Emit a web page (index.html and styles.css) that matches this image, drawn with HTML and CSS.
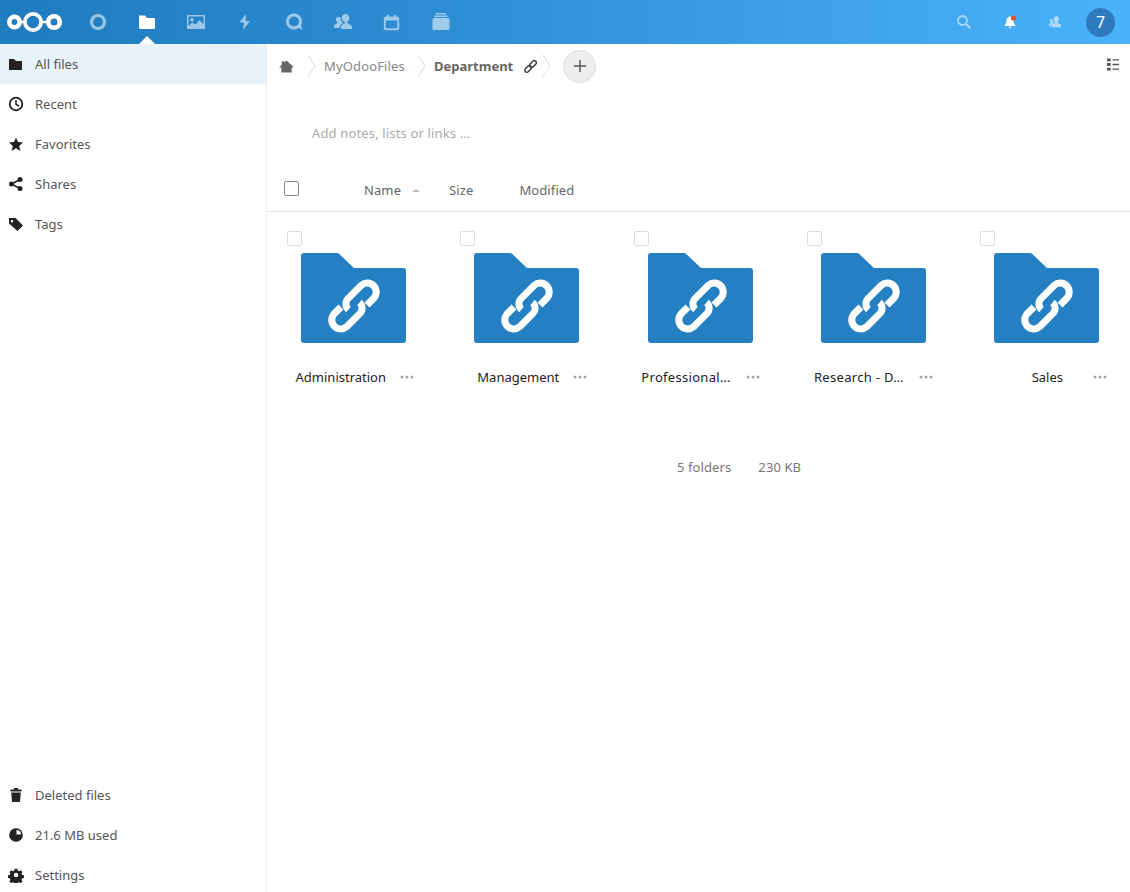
FILE: index.html
```html
<!DOCTYPE html>
<html lang="en">
<head>
    <meta charset="UTF-8">
    <title>Files</title>
    <link rel="stylesheet" href="styles.css">
</head>
<body>
    <header class="topbar">
        <svg class="logo" width="56" height="24" viewBox="0 0 56 24">
            <path d="M12 12h6M33 12h6" class="bridge"/>
            <circle cx="7.5" cy="12" r="5.2" class="ring-thick"/>
            <circle cx="26" cy="12" r="8.1" class="ring-big"/>
            <circle cx="47" cy="12" r="5.800" class="ring-thick"/>
        </svg>
        <nav class="apps">
            <a class="app"><svg width="20" height="20" viewBox="0 0 20 20"><circle cx="10" cy="10" r="6.5" fill="none" stroke="#fff" stroke-width="3.2"/></svg></a>
            <a class="app active"><svg width="20" height="20" viewBox="0 0 20 20"><path d="M2 3.5h6l2 2.5h7a1 1 0 0 1 1 1v9a1 1 0 0 1-1 1H3a1 1 0 0 1-1-1z" fill="#fff"/></svg></a>
            <a class="app"><svg width="20" height="20" viewBox="0 0 20 20"><path fill="#fff" fill-rule="evenodd" d="M2 3h16a1 1 0 0 1 1 1v12a1 1 0 0 1-1 1H2a1 1 0 0 1-1-1V4a1 1 0 0 1 1-1zM2.500 4.500v9.500l4-3.500 3 2 4-4.500 4 4.500v-8zM6 6a1.800 1.800 0 1 1 0 3.600A1.800 1.800 0 0 1 6 6z"/></svg></a>
            <a class="app"><svg width="20" height="20" viewBox="0 0 20 20"><path fill="#fff" d="M11 2 4.500 10.500H9L8 18l7-9h-4.500z"/></svg></a>
            <a class="app"><svg width="20" height="20" viewBox="0 0 20 20"><circle cx="10" cy="9.500" r="6.500" fill="none" stroke="#fff" stroke-width="3"/><path fill="#fff" d="M13 14.500l3-3 2.500 6.500z"/></svg></a>
            <a class="app"><svg width="20" height="20" viewBox="0 0 20 20"><path fill="#fff" d="M12.500 2a3.800 3.800 0 0 1 3.800 4c0 2-1 3.500-2 4.300v1c1 .7 4.700 1.500 4.700 3.700v2H8v-2c0-2.200 3-3 4-3.700v-1C10 9.500 8.700 8 8.700 6a3.800 3.800 0 0 1 3.800-4zM5.500 5a3 3 0 0 1 2 .8c0 2 .8 3.700 2.200 5v.7C8 12.300 6.500 13.500 6.500 16H1v-2c0-1.800 2.500-2.200 3.300-2.800v-1C3.500 9.500 2.700 8.300 2.700 7A2.800 2.800 0 0 1 5.500 5z"/></svg></a>
            <a class="app"><svg width="17" height="17" viewBox="0 0 20 20"><path fill="#fff" fill-rule="evenodd" d="M5 1h2v2h6V1h2v2h2a2 2 0 0 1 2 2v12a2 2 0 0 1-2 2H3a2 2 0 0 1-2-2V5a2 2 0 0 1 2-2h2zM3.200 7.500V16a.8.8 0 0 0 .8.800h12a.8.8 0 0 0 .8-.8V7.500z"/></svg></a>
            <a class="app"><svg width="20" height="20" viewBox="0 0 20 20"><path fill="#fff" d="M5 1h10v1.500H5zM3.500 3.500h13V5h-13zM3 6h14a1.500 1.500 0 0 1 1.500 1.500v9A1.500 1.500 0 0 1 17 18H3a1.500 1.500 0 0 1-1.500-1.500v-9A1.500 1.500 0 0 1 3 6z"/></svg></a>
        </nav>
        <div class="top-right">
            <a class="app top-search"><svg width="16" height="16" viewBox="0 0 16 16"><circle cx="6.500" cy="6.500" r="4.500" fill="none" stroke="#fff" stroke-width="1.800"/><path d="M10 10l4.500 4.500" stroke="#fff" stroke-width="2"/></svg></a>
            <a class="bell"><svg width="14" height="14" viewBox="0 0 16 16"><path fill="#fff" d="M8 1.500c.6 0 1 .4 1 .9 2 .5 3 2 3 4.100 0 3 1 4 2 5v1H2v-1c1-1 2-2 2-5 0-2.100 1-3.600 3-4.100 0-.5.400-.9 1-.9zM6.500 13.500h3a1.500 1.500 0 0 1-3 0z"/><circle cx="12" cy="3.500" r="3" fill="#e8502a"/></svg></a>
            <a class="app top-contacts"><svg width="14" height="14" viewBox="0 0 16 16"><path fill="#fff" d="M9.500 1.500c1.700 0 3 1.300 3 3.200 0 1.600-.8 2.700-1.500 3.300v1c.8.600 4 1 4 3v2H4v-2c0-2 3-2.400 4-3V8C7.200 7.400 6.500 6.300 6.500 4.700c0-1.900 1.300-3.200 3-3.200zM4 4.500c.5 0 1 .2 1.300.500 0 1.500.5 2.800 1.500 3.700v.5C5.500 10 3.500 10.500 3 12.500H1v-1.500c0-1.300 1.500-1.700 2-2.200v-1c-.6-.5-1-1.300-1-2.100C2 5.500 3 4.500 4 4.500z"/></svg></a>
            <div class="avatar">7</div>
        </div>
    </header>
    <div class="layout">
        <aside class="sidebar">
            <ul class="side-list">
                <li class="side-item selected"><svg class="side-icon" viewBox="0 0 16 16"><path d="M1 3h5l2 2h6v9H1z"/></svg>All files</li>
                <li class="side-item"><svg class="side-icon" viewBox="0 0 16 16"><circle cx="8" cy="8" r="6.300" fill="none" stroke="#222" stroke-width="1.800"/><path d="M8 4v4.300l3 1.700" fill="none" stroke="#222" stroke-width="1.500"/></svg>Recent</li>
                <li class="side-item"><svg class="side-icon" viewBox="0 0 16 16"><path d="M8 1.500l2 4.600 5 .5-3.800 3.300 1.200 5L8 12.200 3.600 14.900l1.200-5L1 6.600l5-.5z"/></svg>Favorites</li>
                <li class="side-item"><svg class="side-icon" viewBox="0 0 16 16"><circle cx="12" cy="3.500" r="2.500"/><circle cx="12" cy="12.500" r="2.500"/><circle cx="3.500" cy="8" r="2.500"/><path d="M12 3.500 3.500 8l8.500 4.500" fill="none" stroke="#222" stroke-width="1.500"/></svg>Shares</li>
                <li class="side-item"><svg class="side-icon" viewBox="0 0 16 16"><path fill-rule="evenodd" d="M1 2h6.500L15 9.500 9.500 15 1 7.500zM4 4a1.200 1.200 0 1 0 0 2.400A1.200 1.200 0 0 0 4 4z"/></svg>Tags</li>
            </ul>
            <ul class="side-list">
                <li class="side-item"><svg class="side-icon" viewBox="0 0 16 16"><path d="M6 1h4v1.500h3.500v2h-11v-2H6zM3.200 5.500h9.600l-.8 9.500H4z"/></svg>Deleted files</li>
                <li class="side-item"><svg class="side-icon" viewBox="0 0 16 16"><circle cx="8" cy="8" r="6.800"/><path fill="#fff" d="M8.500 7.500V2.900a4.700 4.700 0 0 1 4.600 4.600z"/></svg>21.6 MB used</li>
                <li class="side-item"><svg class="side-icon" viewBox="0 0 16 16"><path fill-rule="evenodd" d="M6.500 1h3l.4 2 1.500.7 1.800-1.100 2 2.100-1.100 1.700.7 1.600 2 .4v3l-2 .4-.7 1.500 1.100 1.800-2.100 2-1.700-1.100-1.600.7-.4 2h-3l-.4-2-1.500-.7-1.800 1.100-2-2.100 1.100-1.700-.7-1.600-2-.4v-3l2-.4.7-1.500-1.100-1.800 2.100-2 1.700 1.100 1.600-.7zM8 5.500a2.500 2.500 0 1 0 0 5 2.500 2.500 0 0 0 0-5z" transform="translate(.8 .8) scale(.9)"/></svg>Settings</li>
            </ul>
        </aside>
        <main class="content">
            <div class="crumbs">
                <svg class="home" width="15" height="15" viewBox="0 0 16 16"><path fill="#666" d="M8 1.500 16 9h-2.500v5.500h-11V9H0l3-2.800V2.500h2.200v1.600z"/></svg>
                <svg class="chev first" width="10" height="24" viewBox="0 0 10 24"><path d="M1 1l7 11-7 11" fill="none" stroke="#ddd"/></svg>
                <span class="crumb">MyOdooFiles</span>
                <svg class="chev" width="10" height="24" viewBox="0 0 10 24"><path d="M1 1l7 11-7 11" fill="none" stroke="#ddd"/></svg>
                <span class="crumb current">Department</span>
                <svg class="crumb-link" width="13" height="13" viewBox="0 0 16 16"><g fill="none" stroke="#333" stroke-width="1.700" transform="rotate(-45 8 8)"><rect x="-1" y="5.500" width="9.500" height="5" rx="2.500"/><rect x="7.500" y="5.500" width="9.500" height="5" rx="2.500"/></g></svg>
                <svg class="chev" width="10" height="24" viewBox="0 0 10 24"><path d="M1 1l7 11-7 11" fill="none" stroke="#ddd"/></svg>
                <button class="add-btn"><svg width="12" height="12" viewBox="0 0 12 12"><path d="M6 0v12M0 6h12" stroke="#555" stroke-width="1.400"/></svg></button>
                <svg class="view-toggle" width="12" height="13" viewBox="0 0 13 13"><path fill="#555" d="M0 0h4v3H0zM0 5h4v3H0zM0 10h4v3H0zM6 .8h7v1.400H6zM6 5.800h7v1.400H6zM6 10.800h7v1.400H6z"/></svg>
            </div>
            <div class="notes">Add notes, lists or links …</div>
            <div class="list-head">
                <span class="check-all"></span>
                <span class="col col-name">Name</span>
                <span class="sort-arrow"></span>
                <span class="col col-size">Size</span>
                <span class="col">Modified</span>
            </div>
            <div class="tiles">
                <div class="tile">
                    <span class="tile-check"></span>
                    <svg class="folder" width="105" height="90" viewBox="0 0 105 90"><use href="#folder-shared"/></svg>
                    <div class="tile-row"><span class="tile-name">Administration</span><svg class="dots" width="14" height="4" viewBox="0 0 14 4"><use href="#dots"/></svg></div>
                </div>
                <div class="tile">
                    <span class="tile-check"></span>
                    <svg class="folder" width="105" height="90" viewBox="0 0 105 90"><use href="#folder-shared"/></svg>
                    <div class="tile-row"><span class="tile-name">Management</span><svg class="dots" width="14" height="4" viewBox="0 0 14 4"><use href="#dots"/></svg></div>
                </div>
                <div class="tile">
                    <span class="tile-check"></span>
                    <svg class="folder" width="105" height="90" viewBox="0 0 105 90"><use href="#folder-shared"/></svg>
                    <div class="tile-row"><span class="tile-name cut">Professional…</span><svg class="dots" width="14" height="4" viewBox="0 0 14 4"><use href="#dots"/></svg></div>
                </div>
                <div class="tile">
                    <span class="tile-check"></span>
                    <svg class="folder" width="105" height="90" viewBox="0 0 105 90"><use href="#folder-shared"/></svg>
                    <div class="tile-row"><span class="tile-name cut">Research - D…</span><svg class="dots" width="14" height="4" viewBox="0 0 14 4"><use href="#dots"/></svg></div>
                </div>
                <div class="tile">
                    <span class="tile-check"></span>
                    <svg class="folder" width="105" height="90" viewBox="0 0 105 90"><use href="#folder-shared"/></svg>
                    <div class="tile-row"><span class="tile-name short">Sales</span><svg class="dots" width="14" height="4" viewBox="0 0 14 4"><use href="#dots"/></svg></div>
                </div>
            </div>
            <div class="summary"><span>5 folders</span><span>230 KB</span></div>
        </main>
    </div>
    <svg width="0" height="0" class="defs">
        <defs>
            <g id="dots" fill="#a5a5a5">
                <circle cx="2" cy="2" r="1.500"/>
                <circle cx="7" cy="2" r="1.500"/>
                <circle cx="12" cy="2" r="1.500"/>
            </g>
            <g id="folder-shared">
                <path fill="#2580c3" d="M3 0h33a3 3 0 0 1 2 .8L53 15h49a3 3 0 0 1 3 3v69a3 3 0 0 1-3 3H3a3 3 0 0 1-3-3V3a3 3 0 0 1 3-3z"/>
                <g fill="none" stroke="#fff" stroke-width="7">
                    <path d="M66 52 73 45A9 9 0 0 0 60.300 32.300L47 45.600A7.500 7.500 0 0 0 47.500 56.500"/>
                    <path d="M40 54 33 61A9 9 0 0 0 45.700 73.700L59 60.400A7.500 7.500 0 0 0 58.500 49.500"/>
                </g>
            </g>
        </defs>
    </svg>
</body>
</html>
```

FILE: styles.css
```css
* {
    box-sizing: border-box;
}
html, body {
    height: 100%;
}
body {
    margin: 0;
    font-family: "Noto Sans", "Open Sans", sans-serif;
    font-size: 13px;
    color: #222;
    background: #fff;
    overflow: hidden;
}
.defs {
    display: block;
    height: 0;
}
.topbar {
    height: 44px;
    display: flex;
    align-items: center;
    background: linear-gradient(90deg, #1f7cbe 0%, #2a88cf 30%, #3a9ee4 65%, #4ab2fa 100%);
}
.logo {
    margin: 0 0 1px 7px;
    flex: none;
    fill: none;
    stroke: #fff;
}
.ring-thick {
    stroke-width: 4.6px;
}
.ring-big {
    stroke-width: 3.8px;
}
.bridge {
    stroke-width: 2.5px;
}
.apps {
    display: flex;
    margin-left: 10px;
}
.app {
    width: 49px;
    height: 44px;
    display: flex;
    align-items: center;
    justify-content: center;
    opacity: 0.55;
    position: relative;
}
.app.active {
    opacity: 1;
}
.app.active::after {
    content: "";
    position: absolute;
    bottom: 0;
    left: 50%;
    margin-left: -8px;
    border: 8px solid transparent;
    border-top: 0;
    border-bottom-color: #fff;
}
.top-right {
    margin-left: auto;
    display: flex;
    align-items: center;
    padding-right: 15px;
}
.top-search, .top-contacts {
    width: 30px;
}
.bell {
    width: 30px;
    margin: 0 15px 0 16px;
    display: flex;
    justify-content: center;
}
.avatar {
    width: 29px;
    height: 29px;
    margin-left: 16px;
    border-radius: 50%;
    background: #2f79bf;
    color: #fff;
    font-size: 16px;
    line-height: 29px;
    text-align: center;
}
.layout {
    display: flex;
    height: 851px;
}
.sidebar {
    width: 267px;
    flex: none;
    border-right: 1px solid #eee;
    display: flex;
    flex-direction: column;
    justify-content: space-between;
}
.side-list {
    list-style: none;
    margin: 0;
    padding: 0;
}
.side-item {
    height: 40px;
    display: flex;
    align-items: center;
    color: #555;
}
.side-item.selected {
    background: #e8f3f9;
}
.side-icon {
    width: 16px;
    height: 16px;
    margin: 0 11px 0 8px;
    fill: #222;
}
.content {
    flex: 1;
    min-width: 0;
}
.crumbs {
    height: 44px;
    display: flex;
    align-items: center;
    padding-left: 12px;
    position: relative;
}
.chev {
    margin: 0 7px 0 12px;
}
.chev.first {
    margin-left: 13px;
}
.crumb {
    color: #888;
    letter-spacing: 0.15px;
}
.crumb.current {
    color: #666;
    font-weight: 700;
    letter-spacing: 0;
}
.crumb-link {
    margin-left: 11px;
}
.crumb-link + .chev {
    margin-left: 5px;
    margin-right: 0;
}
.add-btn {
    width: 33px;
    height: 33px;
    margin-left: 11px;
    border-radius: 50%;
    border: 1px solid #ddd;
    background: #eee;
    padding: 0;
    display: flex;
    align-items: center;
    justify-content: center;
}
.view-toggle {
    margin: 0 11px 3px auto;
}
.notes {
    height: 79px;
    padding: 36px 0 0 45px;
    color: #aaa;
    letter-spacing: 0.15px;
}
.list-head {
    height: 45px;
    display: flex;
    align-items: center;
    border-bottom: 1px solid #e8e8e8;
    color: #666;
    padding-top: 2px;
}
.check-all {
    width: 15px;
    height: 15px;
    margin: 0 0 3px 17px;
    border: 1px solid #888;
    border-radius: 2px;
}
.col {
    letter-spacing: 0.1px;
}
.col-name {
    margin-left: 65px;
}
.sort-arrow {
    width: 0;
    height: 0;
    margin-left: 11px;
    border: 4px solid transparent;
    border-top: 0;
    border-bottom: 3px solid #bbb;
}
.col-size {
    margin: 0 46px 0 29px;
}
.tiles {
    display: grid;
    grid-template-columns: repeat(5, 173.25px);
}
.tile {
    height: 176px;
    padding-top: 19px;
    position: relative;
}
.tile-check {
    position: absolute;
    top: 19px;
    left: 20px;
    width: 15px;
    height: 15px;
    border: 1px solid #ddd;
    border-radius: 2px;
}
.folder {
    display: block;
    margin: 22px 0 0 34px;
}
.tile-row {
    display: flex;
    align-items: center;
    height: 20px;
    margin-top: 24px;
    position: relative;
}
.tile-name {
    width: 119px;
    text-align: right;
    color: #222;
    white-space: nowrap;
}
.tile-name.cut {
    width: 117px;
    letter-spacing: 0.3px;
}
.tile-name.short {
    width: 103px;
}
.dots {
    position: absolute;
    left: 132.5px;
}
.summary {
    display: flex;
    gap: 27px;
    margin: 70px 0 0 410px;
    color: #777;
    letter-spacing: 0.1px;
}
```
